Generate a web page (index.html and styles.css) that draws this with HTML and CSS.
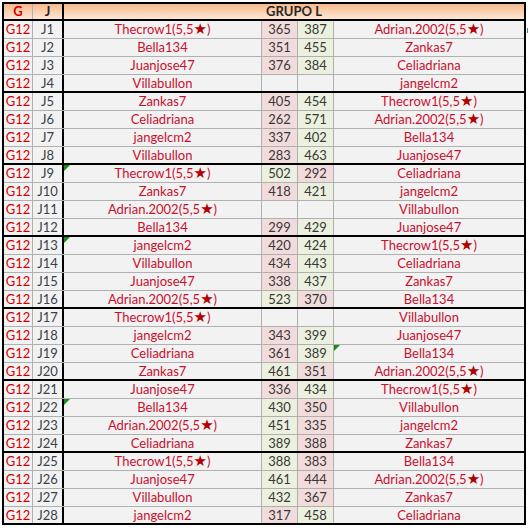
FILE: index.html
```html
<!DOCTYPE html>
<html>
<head>
<meta charset="utf-8">
<link rel="stylesheet" href="styles.css">
</head>
<body>
<div class="sheet">
  <div class="head">
    <div class="hg">G</div>
    <div class="hj">J</div>
    <div class="hgrp">GRUPO L</div>
  </div>

  <div class="row mark">
    <div class="g">G12</div><div class="j">J1</div>
    <div class="n">Thecrow1(5,5<span class="star">★</span>)</div>
    <div class="s lo">365</div><div class="s hi">387</div>
    <div class="n">Adrian.2002(5,5<span class="star">★</span>)</div>
  </div>
  <div class="row">
    <div class="g">G12</div><div class="j">J2</div>
    <div class="n">Bella134</div>
    <div class="s lo">351</div><div class="s hi">455</div>
    <div class="n">Zankas7</div>
  </div>
  <div class="row">
    <div class="g">G12</div><div class="j">J3</div>
    <div class="n">Juanjose47</div>
    <div class="s lo">376</div><div class="s hi">384</div>
    <div class="n">Celiadriana</div>
  </div>
  <div class="row end">
    <div class="g">G12</div><div class="j">J4</div>
    <div class="n">Villabullon</div>
    <div class="s"></div><div class="s"></div>
    <div class="n">jangelcm2</div>
  </div>

  <div class="row">
    <div class="g">G12</div><div class="j">J5</div>
    <div class="n">Zankas7</div>
    <div class="s lo">405</div><div class="s hi">454</div>
    <div class="n">Thecrow1(5,5<span class="star">★</span>)</div>
  </div>
  <div class="row">
    <div class="g">G12</div><div class="j">J6</div>
    <div class="n">Celiadriana</div>
    <div class="s lo">262</div><div class="s hi">571</div>
    <div class="n">Adrian.2002(5,5<span class="star">★</span>)</div>
  </div>
  <div class="row">
    <div class="g">G12</div><div class="j">J7</div>
    <div class="n">jangelcm2</div>
    <div class="s lo">337</div><div class="s hi">402</div>
    <div class="n">Bella134</div>
  </div>
  <div class="row end">
    <div class="g">G12</div><div class="j">J8</div>
    <div class="n">Villabullon</div>
    <div class="s lo">283</div><div class="s hi">463</div>
    <div class="n">Juanjose47</div>
  </div>

  <div class="row">
    <div class="g">G12</div><div class="j">J9</div>
    <div class="n flag">Thecrow1(5,5<span class="star">★</span>)</div>
    <div class="s hi">502</div><div class="s lo">292</div>
    <div class="n">Celiadriana</div>
  </div>
  <div class="row">
    <div class="g">G12</div><div class="j">J10</div>
    <div class="n">Zankas7</div>
    <div class="s lo">418</div><div class="s hi">421</div>
    <div class="n">jangelcm2</div>
  </div>
  <div class="row">
    <div class="g">G12</div><div class="j">J11</div>
    <div class="n">Adrian.2002(5,5<span class="star">★</span>)</div>
    <div class="s"></div><div class="s"></div>
    <div class="n">Villabullon</div>
  </div>
  <div class="row end">
    <div class="g">G12</div><div class="j">J12</div>
    <div class="n">Bella134</div>
    <div class="s lo">299</div><div class="s hi">429</div>
    <div class="n">Juanjose47</div>
  </div>

  <div class="row">
    <div class="g">G12</div><div class="j">J13</div>
    <div class="n flag">jangelcm2</div>
    <div class="s lo">420</div><div class="s hi">424</div>
    <div class="n">Thecrow1(5,5<span class="star">★</span>)</div>
  </div>
  <div class="row">
    <div class="g">G12</div><div class="j">J14</div>
    <div class="n">Villabullon</div>
    <div class="s lo">434</div><div class="s hi">443</div>
    <div class="n">Celiadriana</div>
  </div>
  <div class="row">
    <div class="g">G12</div><div class="j">J15</div>
    <div class="n">Juanjose47</div>
    <div class="s lo">338</div><div class="s hi">437</div>
    <div class="n">Zankas7</div>
  </div>
  <div class="row end">
    <div class="g">G12</div><div class="j">J16</div>
    <div class="n">Adrian.2002(5,5<span class="star">★</span>)</div>
    <div class="s hi">523</div><div class="s lo">370</div>
    <div class="n">Bella134</div>
  </div>

  <div class="row">
    <div class="g">G12</div><div class="j">J17</div>
    <div class="n">Thecrow1(5,5<span class="star">★</span>)</div>
    <div class="s"></div><div class="s"></div>
    <div class="n">Villabullon</div>
  </div>
  <div class="row">
    <div class="g">G12</div><div class="j">J18</div>
    <div class="n">jangelcm2</div>
    <div class="s lo">343</div><div class="s hi">399</div>
    <div class="n">Juanjose47</div>
  </div>
  <div class="row">
    <div class="g">G12</div><div class="j">J19</div>
    <div class="n">Celiadriana</div>
    <div class="s lo">361</div><div class="s hi">389</div>
    <div class="n flag">Bella134</div>
  </div>
  <div class="row end">
    <div class="g">G12</div><div class="j">J20</div>
    <div class="n">Zankas7</div>
    <div class="s hi">461</div><div class="s lo">351</div>
    <div class="n">Adrian.2002(5,5<span class="star">★</span>)</div>
  </div>

  <div class="row">
    <div class="g">G12</div><div class="j">J21</div>
    <div class="n">Juanjose47</div>
    <div class="s lo">336</div><div class="s hi">434</div>
    <div class="n">Thecrow1(5,5<span class="star">★</span>)</div>
  </div>
  <div class="row">
    <div class="g">G12</div><div class="j">J22</div>
    <div class="n flag">Bella134</div>
    <div class="s hi">430</div><div class="s lo">350</div>
    <div class="n">Villabullon</div>
  </div>
  <div class="row">
    <div class="g">G12</div><div class="j">J23</div>
    <div class="n">Adrian.2002(5,5<span class="star">★</span>)</div>
    <div class="s hi">451</div><div class="s lo">335</div>
    <div class="n">jangelcm2</div>
  </div>
  <div class="row end">
    <div class="g">G12</div><div class="j">J24</div>
    <div class="n">Celiadriana</div>
    <div class="s hi">389</div><div class="s lo">388</div>
    <div class="n">Zankas7</div>
  </div>

  <div class="row">
    <div class="g">G12</div><div class="j">J25</div>
    <div class="n">Thecrow1(5,5<span class="star">★</span>)</div>
    <div class="s hi">388</div><div class="s lo">383</div>
    <div class="n">Bella134</div>
  </div>
  <div class="row">
    <div class="g">G12</div><div class="j">J26</div>
    <div class="n">Juanjose47</div>
    <div class="s hi">461</div><div class="s lo">444</div>
    <div class="n">Adrian.2002(5,5<span class="star">★</span>)</div>
  </div>
  <div class="row">
    <div class="g">G12</div><div class="j">J27</div>
    <div class="n">Villabullon</div>
    <div class="s hi">432</div><div class="s lo">367</div>
    <div class="n">Zankas7</div>
  </div>
  <div class="row end">
    <div class="g">G12</div><div class="j">J28</div>
    <div class="n">jangelcm2</div>
    <div class="s lo">317</div><div class="s hi">458</div>
    <div class="n">Celiadriana</div>
  </div>
</div>
</body>
</html>
```

FILE: styles.css
```css
html, body {
  margin: 0;
  padding: 0;
  background: #ffffff;
}

body {
  font-family: Lato, "Liberation Sans", sans-serif;
  font-size: 13px;
}

.sheet {
  margin: 2px 0 0 2px;
  width: 524px;
  box-sizing: border-box;
  border: 2px solid #000;
}

.head {
  display: grid;
  grid-template-columns: 29px 31px 460px;
  height: 17px;
  box-sizing: border-box;
  border-bottom: 2px solid #000;
  background: linear-gradient(#f7b98a, #fde7d6);
  font-weight: bold;
  line-height: 15px;
  text-align: center;
}

.hg {
  color: #d40000;
  border-right: 1px solid #b0b0b0;
}

.hj {
  color: #262626;
  border-right: 2px solid #000;
}

.hgrp {
  color: #262626;
}

.row {
  position: relative;
  display: grid;
  grid-template-columns: 29px 31px 198px 36px 36px 190px;
  height: 18px;
  box-sizing: border-box;
  border-bottom: 1px solid #b0b0b0;
  background: #f2f2f2;
  line-height: 17px;
  text-align: center;
}

.row.end {
  border-bottom: 2px solid #000;
}

.row.end:last-child {
  border-bottom: none;
  height: 16px;
}

.row > div {
  box-sizing: border-box;
  border-right: 1px solid #b0b0b0;
  white-space: nowrap;
  overflow: hidden;
}

.row > div:last-child {
  border-right: none;
}

.row .j {
  border-right: 2px solid #000;
  color: #3a3f48;
}

.g {
  color: #d40000;
}

.n {
  color: #c8102e;
}

.star {
  font-family: "DejaVu Sans", sans-serif;
  color: #b00000;
  font-size: 15px;
  line-height: 0;
}

.s {
  color: #383838;
}

.s.lo {
  background: #f2dcdb;
}

.s.hi {
  background: #ebf1de;
}

.flag {
  position: relative;
}

.flag::before {
  content: "";
  position: absolute;
  left: 0;
  top: 0;
  border-top: 6px solid #1a8a1a;
  border-right: 6px solid transparent;
}

.row.mark::after {
  content: "";
  position: absolute;
  right: -5px;
  top: 7px;
  width: 2px;
  height: 5px;
  background: #2aa08a;
}
```
